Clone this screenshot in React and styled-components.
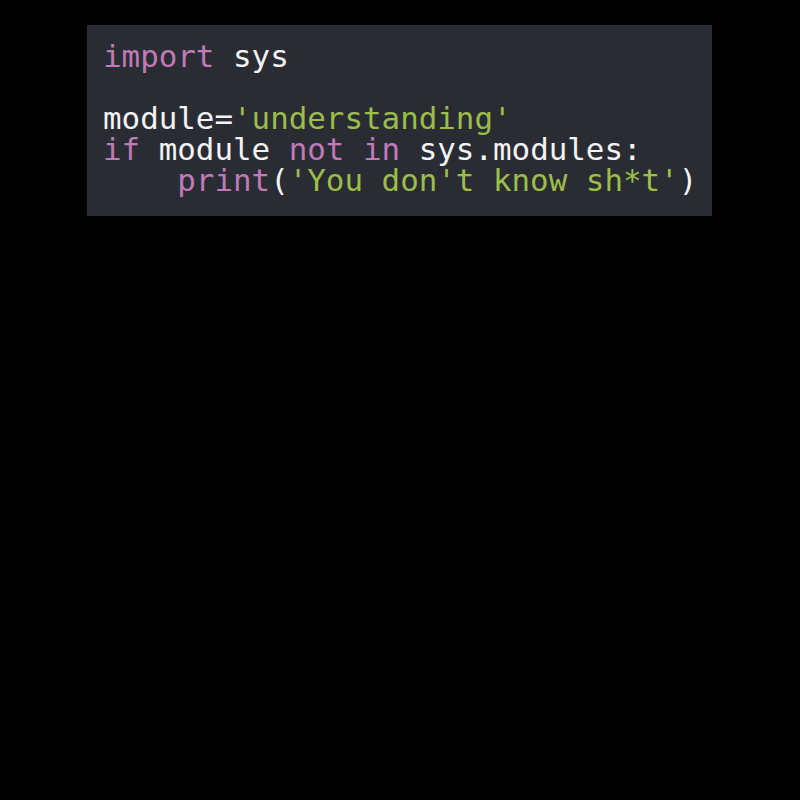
import React from "react";
import styled, { createGlobalStyle } from "styled-components";

const GlobalStyle = createGlobalStyle`
  html, body {
    margin: 0;
    padding: 0;
    background: #000;
  }
`;

const Page = styled.div`
  display: flex;
  justify-content: center;
  align-items: flex-start;
  padding-top: 25px;
  min-height: 800px;
  box-sizing: border-box;
`;

const CodeBlock = styled.pre`
  box-sizing: border-box;
  width: 625px;
  margin: 0 1px 0 0;
  padding: 16px 16px 20px 16px;
  background: #2a2c34;
  color: #f4f4f4;
  font-family: "DejaVu Sans Mono", "Liberation Mono", monospace;
  font-size: 30.85px;
  line-height: 31px;
  white-space: pre;
`;

const Keyword = styled.span`
  color: #c07ab8;
`;

const Str = styled.span`
  color: #9cbe48;
`;

const App = () => {
  return (
    <>
      <GlobalStyle />
      <Page>
        <CodeBlock>
          <Keyword>import</Keyword> sys{"\n"}
          {"\n"}
          module=<Str>'understanding'</Str>{"\n"}
          <Keyword>if</Keyword> module <Keyword>not</Keyword> <Keyword>in</Keyword> sys.modules:{"\n"}
          {"    "}<Keyword>print</Keyword>(<Str>'You don't know sh*t'</Str>)
        </CodeBlock>
      </Page>
    </>
  );
};

export default App;
